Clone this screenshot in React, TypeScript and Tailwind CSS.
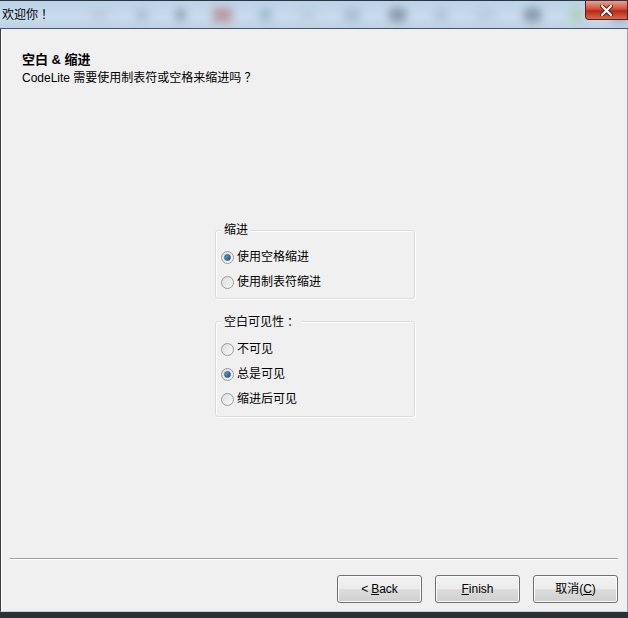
import React from 'react';

const font = "font-['Liberation_Sans','Noto_Sans_CJK_SC',sans-serif]";
const cjk = "font-['Noto_Sans_CJK_SC',sans-serif] ml-[3px]";

const Radio: React.FC<{ label: string; checked?: boolean }> = ({ label, checked }) => (
  <div className="flex items-center h-[20px]">
    <span className="w-[13px] h-[13px] rounded-full border border-[#9a9a9a] bg-gradient-to-br from-[#dcdcdc] to-[#fafafa] flex items-center justify-center ml-[5px]">
      {checked && (
        <span className="w-[7px] h-[7px] rounded-full bg-gradient-to-br from-[#6fa6d6] to-[#1c4f7f] border border-[#2d5c8a]" />
      )}
    </span>
    <span className="ml-[3px] text-[12px] text-black leading-none">{label}</span>
  </div>
);

const Group: React.FC<{ title: React.ReactNode; children: React.ReactNode; className?: string }> = ({ title, children, className }) => (
  <div className={`relative w-[200px] border border-[#d8dcdf] rounded-[3px] shadow-[inset_1px_1px_0_#ffffff,1px_1px_0_#ffffff] ${className ?? ''}`}>
    <span className="absolute -top-[9px] left-[5px] px-[3px] bg-[#f0f0f0] text-[12px] leading-[16px] text-black">
      {title}
    </span>
    {children}
  </div>
);

const Button: React.FC<{ children: React.ReactNode }> = ({ children }) => (
  <button className="w-[85px] h-[28px] rounded-[3px] border border-[#707070] bg-[linear-gradient(#f2f2f2_0%,#ebebeb_50%,#dddddd_51%,#cfcfcf_100%)] shadow-[inset_0_0_0_1px_#fcfcfc] text-[12px] text-black flex items-center justify-center">
    {children}
  </button>
);

export default function App() {
  return (
    <div className={`w-[628px] h-[618px] flex flex-col bg-[#f0f0f0] overflow-hidden ${font}`}>
      {/* title bar */}
      <div className="relative h-[29px] shrink-0 border-t border-[#2b3540] border-b border-b-[#4b5560] bg-[linear-gradient(#bcd3e8,#c9dbec_60%,#bdd2e6)] flex items-start">
        <div className="absolute inset-0 flex items-center gap-[28px] pl-[90px] opacity-40 blur-[4px]">
          <span className="w-[20px] h-[10px] bg-[#a8b8c8]" />
          <span className="w-[14px] h-[10px] bg-[#7890a8]" />
          <span className="w-[10px] h-[10px] bg-[#2a3a4a]" />
          <span className="w-[22px] h-[14px] bg-[#a03a30]" />
          <span className="w-[12px] h-[12px] bg-[#60809a]" />
          <span className="w-[20px] h-[12px] bg-[#b0bccb]" />
          <span className="w-[18px] h-[12px] bg-[#7890a8]" />
          <span className="w-[22px] h-[14px] rounded-full bg-[#2a3644]" />
          <span className="w-[14px] h-[12px] bg-[#8ea4bb]" />
          <span className="w-[22px] h-[12px] bg-[#a8b8cc]" />
          <span className="w-[22px] h-[14px] rounded-full bg-[#2a3644]" />
          <span className="w-[16px] h-[14px] bg-[#90c070]" />
          <span className="w-[18px] h-[14px] bg-[#55606c]" />
        </div>
        <span className="relative mt-[5px] ml-[2px] text-[12px] leading-[16px] text-black">
          欢迎你<span className={cjk}>！</span>
        </span>
        <div className="absolute right-0 top-0 w-[43px] h-[19px] rounded-bl-[4px] border border-t-0 border-[#5a2020] bg-[linear-gradient(#e8a090,#d0503a_45%,#b8281a_55%,#d86a48)] flex items-center justify-center">
          <svg width="13" height="11" viewBox="0 0 13 11">
            <path d="M2 1 L11 10 M11 1 L2 10" stroke="#5a1a10" strokeWidth="4" strokeLinecap="round" />
            <path d="M2 1 L11 10 M11 1 L2 10" stroke="#ffffff" strokeWidth="2.2" strokeLinecap="round" />
          </svg>
        </div>
      </div>

      {/* window body */}
      <div className="flex-1 flex flex-col border-l border-l-[#3a3a3a] border-r border-r-[#9aa4ad] border-b border-b-[#c8d0d8] shadow-[inset_1px_0_0_#ffffff]">
        <div className="pl-[21px] pt-[23px]">
          <div className="text-[13px] font-bold leading-[16px] text-black">空白 &amp; 缩进</div>
          <div className="mt-[1px] text-[12px] leading-[16px] text-black">
            CodeLite 需要使用制表符或空格来缩进吗<span className={cjk}>？</span>
          </div>
        </div>

        <div className="flex flex-col items-center ml-[2px] mt-[144px]">
          <Group title="缩进" className="pt-[16px] pb-[6px]">
            <div className="flex flex-col gap-[5px]">
              <Radio label="使用空格缩进" checked />
              <Radio label="使用制表符缩进" />
            </div>
          </Group>
          <Group title={<>空白可见性<span className={cjk}>：</span></>} className="mt-[22px] pt-[17px] pb-[7px]">
            <div className="flex flex-col gap-[5px]">
              <Radio label="不可见" />
              <Radio label="总是可见" checked />
              <Radio label="缩进后可见" />
            </div>
          </Group>
        </div>

        <div className="mt-[141px] mx-[9px] h-[2px] border-t border-[#a0a0a0] border-b border-b-[#ffffff]" />

        <div className="flex justify-end gap-[13px] mt-[15px] pr-[9px]">
          <Button>
            &lt; <span className="underline ml-[3px]">B</span>ack
          </Button>
          <Button>
            <span className="underline">F</span>inish
          </Button>
          <Button>
            取消(<span className="underline">C</span>)
          </Button>
        </div>
      </div>

      {/* taskbar strip */}
      <div className="h-[6px] shrink-0 bg-[#2a3238]" />
    </div>
  );
}
